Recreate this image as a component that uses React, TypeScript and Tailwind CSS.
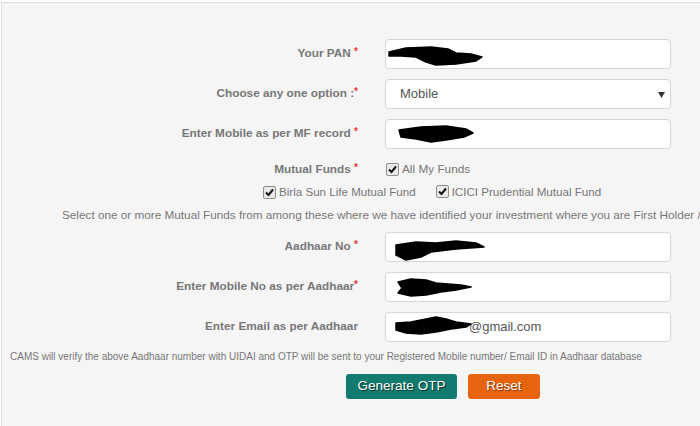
import React from "react";

const Star = () => <span className="text-[#e53935] text-[10px] align-top relative top-[-1px]">*</span>;

function Check() {
  return (
    <span className="inline-flex w-[13px] h-[13px] border border-[#8f8f8f] rounded-[2px] bg-[#e9e9e9] items-center justify-center shrink-0">
      <svg width="9" height="9" viewBox="0 0 9 9">
        <path d="M1 4.5 L3.5 7 L8 1.5" stroke="#111" strokeWidth="2" fill="none" />
      </svg>
    </span>
  );
}

function Blob({ d }: { d: string }) {
  return (
    <svg className="absolute left-0 top-0" width="286" height="30" viewBox="0 0 286 30">
      <path d={d} fill="#000" stroke="#000" strokeWidth="1.5" strokeLinejoin="round" />
    </svg>
  );
}

function Row({ label, children }: { label: React.ReactNode; children: React.ReactNode }) {
  return (
    <div className="grid grid-cols-[356px_286px] gap-x-[27px] items-center">
      <div className="text-right text-[11.8px] font-bold text-[#777]">{label}</div>
      {children}
    </div>
  );
}

function Input({ blob, text }: { blob?: string; text?: string }) {
  return (
    <div className="relative h-[30px] bg-white border border-[#d6d6d6] rounded-[4px] flex items-center text-[13px] text-[#555]">
      {text && <span className="pl-[83px]">{text}</span>}
      {blob && <Blob d={blob} />}
    </div>
  );
}

export default function App() {
  return (
    <div className="h-[426px] w-[700px] overflow-hidden bg-white font-['Liberation_Sans',Arial,sans-serif]">
      <div className="mt-[2px] ml-[1px] h-[424px] border-t border-l border-[#dcdcdc] bg-[#f5f5f5] pt-[36px]">
        <div className="flex flex-col gap-[10px]">
          <Row label={<>Your PAN <Star /></>}>
            <Input blob="M3,12 L20,8 L45,7 L62,9 L70,13 L85,14 L96,17 L90,21 L70,24 L50,25 L40,22 L30,17 L15,16 L3,16 Z" />
          </Row>
          <Row label={<>Choose any one option :<Star /></>}>
            <div className="relative h-[30px] bg-white border border-[#d6d6d6] rounded-[4px] flex items-center text-[13px] text-[#555] pl-[14px]">
              Mobile
              <svg className="absolute right-[5px] top-[12px]" width="7" height="6" viewBox="0 0 7 6">
                <path d="M0 0 L7 0 L3.5 6 Z" fill="#333" />
              </svg>
            </div>
          </Row>
          <Row label={<>Enter Mobile as per MF record <Star /></>}>
            <Input blob="M13,10 L35,7 L60,6 L80,9 L87,13 L78,17 L60,20 L45,22 L30,19 L15,17 Z" />
          </Row>
        </div>
        <div className="mt-[12px] grid grid-cols-[356px_286px] gap-x-[27px] items-center h-[14px]">
          <div className="text-right text-[11.8px] font-bold text-[#777]">Mutual Funds <Star /></div>
          <div className="flex items-center gap-[3px] text-[11.8px] text-[#777] pl-[1px]">
            <Check /> All My Funds
          </div>
        </div>
        <div className="mt-[10px] h-[14px] flex items-center pl-[261px] text-[11.6px] text-[#777]">
          <Check /><span className="ml-[3px]">Birla Sun Life Mutual Fund</span>
          <span className="ml-[20px]"><Check /></span><span className="ml-[3px]">ICICI Prudential Mutual Fund</span>
        </div>
        <div className="mt-[7px] h-[14px] pl-[60px] text-[11.75px] text-[#777] whitespace-nowrap">
          Select one or more Mutual Funds from among these where we have identified your investment where you are First Holder / Joint Holder
        </div>
        <div className="mt-[12px] flex flex-col gap-[10px]">
          <Row label={<>Aadhaar No <Star /></>}>
            <Input blob="M10,12 L30,9 L50,10 L70,8 L90,10 L98,14 L70,16 L45,19 L35,24 L20,27 L10,22 Z" />
          </Row>
          <Row label={<>Enter Mobile No as per Aadhaar<Star /></>}>
            <Input blob="M12,9 L25,6 L40,7 L50,10 L62,11 L75,12 L85,14 L70,17 L55,19 L40,22 L25,23 L12,20 L16,15 Z" />
          </Row>
          <Row label={<>Enter Email as per Aadhaar</>}>
            <Input text="@gmail.com" blob="M10,10 L25,9 L40,6 L50,4 L60,6 L70,9 L85,11 L80,14 L65,16 L50,19 L35,21 L20,20 L10,17 Z" />
          </Row>
        </div>
        <div className="mt-[9px] h-[12px] pl-[8px] text-[10px] text-[#777] whitespace-nowrap leading-[12px]">
          CAMS will verify the above Aadhaar number with UIDAI and OTP will be sent to your Registered Mobile number/ Email ID in Aadhaar database
        </div>
        <div className="mt-[11px] flex pl-[344px] gap-[11px]">
          <button className="w-[111px] h-[25px] rounded-[3px] bg-[#127a6f] text-white text-[13.5px] [text-shadow:1px_1px_1px_rgba(0,0,0,0.6)]">
            Generate OTP
          </button>
          <button className="w-[72px] h-[25px] rounded-[3px] bg-[#e6640f] text-white text-[13.5px] [text-shadow:1px_1px_1px_rgba(0,0,0,0.5)]">
            Reset
          </button>
        </div>
      </div>
    </div>
  );
}
